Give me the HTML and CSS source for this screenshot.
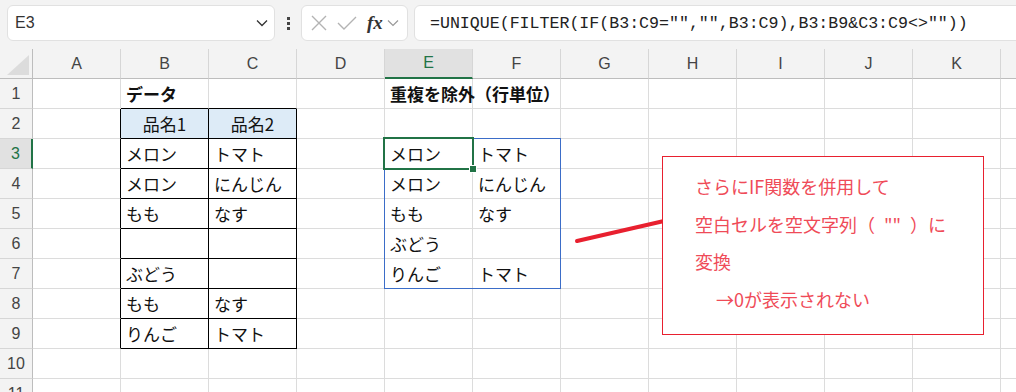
FILE: index.html
```html
<!DOCTYPE html>
<html>
<head>
    <meta charset="UTF-8">
    <title>UNIQUE FILTER</title>
    <link rel="stylesheet" href="styles.css">
</head>
<body>
    <div class="toolbar">
        <div class="name-box">
            <span>E3</span>
            <svg class="chev" width="12" height="8" viewBox="0 0 12 8"><path d="M1 1.5 L6 6.5 L11 1.5" fill="none" stroke="#333" stroke-width="1.3"/></svg>
        </div>
        <div class="dots"><i></i><i></i><i></i></div>
        <div class="fx-box">
            <svg width="20" height="20" viewBox="0 0 20 20"><path d="M3 3 L17 17 M17 3 L3 17" stroke="#b3b3b3" stroke-width="1.4"/></svg>
            <svg width="22" height="20" viewBox="0 0 22 20"><path d="M2 10 L8 16 L20 4" fill="none" stroke="#b3b3b3" stroke-width="1.4"/></svg>
            <span class="fx">fx</span>
            <svg class="chev" width="12" height="8" viewBox="0 0 12 8"><path d="M1 1.5 L6 6.5 L11 1.5" fill="none" stroke="#999" stroke-width="1.2"/></svg>
        </div>
        <div class="formula">=UNIQUE(FILTER(IF(B3:C9="","",B3:C9),B3:B9&amp;C3:C9&lt;&gt;""))</div>
    </div>

    <div class="sheet">
        <!-- column headers -->
        <div class="hd corner"><span></span></div>
        <div class="hd">A</div><div class="hd">B</div><div class="hd">C</div><div class="hd">D</div>
        <div class="hd sel">E</div><div class="hd">F</div><div class="hd">G</div><div class="hd">H</div>
        <div class="hd">I</div><div class="hd">J</div><div class="hd">K</div><div class="hd"></div>

        <!-- row 1 -->
        <div class="rh">1</div>
        <div class="c"></div><div class="c bt title">データ</div><div class="c bt"></div><div class="c"></div>
        <div class="c title">重複を除外（行単位）</div><div class="c"></div><div class="c"></div><div class="c"></div>
        <div class="c"></div><div class="c"></div><div class="c"></div><div class="c"></div>

        <!-- row 2 -->
        <div class="rh">2</div>
        <div class="c bl"></div><div class="c b head">品名1</div><div class="c b head">品名2</div><div class="c"></div>
        <div class="c"></div><div class="c"></div><div class="c"></div><div class="c"></div>
        <div class="c"></div><div class="c"></div><div class="c"></div><div class="c"></div>

        <!-- row 3 -->
        <div class="rh sel">3</div>
        <div class="c bl"></div><div class="c b">メロン</div><div class="c b">トマト</div><div class="c"></div>
        <div class="c">メロン</div><div class="c">トマト</div><div class="c"></div><div class="c"></div>
        <div class="c"></div><div class="c"></div><div class="c"></div><div class="c"></div>

        <!-- row 4 -->
        <div class="rh">4</div>
        <div class="c bl"></div><div class="c b">メロン</div><div class="c b">にんじん</div><div class="c"></div>
        <div class="c">メロン</div><div class="c">にんじん</div><div class="c"></div><div class="c"></div>
        <div class="c"></div><div class="c"></div><div class="c"></div><div class="c"></div>

        <!-- row 5 -->
        <div class="rh">5</div>
        <div class="c bl"></div><div class="c b">もも</div><div class="c b">なす</div><div class="c"></div>
        <div class="c">もも</div><div class="c">なす</div><div class="c"></div><div class="c"></div>
        <div class="c"></div><div class="c"></div><div class="c"></div><div class="c"></div>

        <!-- row 6 -->
        <div class="rh">6</div>
        <div class="c bl"></div><div class="c b"></div><div class="c b"></div><div class="c"></div>
        <div class="c">ぶどう</div><div class="c"></div><div class="c"></div><div class="c"></div>
        <div class="c"></div><div class="c"></div><div class="c"></div><div class="c"></div>

        <!-- row 7 -->
        <div class="rh">7</div>
        <div class="c bl"></div><div class="c b">ぶどう</div><div class="c b"></div><div class="c"></div>
        <div class="c">りんご</div><div class="c">トマト</div><div class="c"></div><div class="c"></div>
        <div class="c"></div><div class="c"></div><div class="c"></div><div class="c"></div>

        <!-- row 8 -->
        <div class="rh">8</div>
        <div class="c bl"></div><div class="c b">もも</div><div class="c b">なす</div><div class="c"></div>
        <div class="c"></div><div class="c"></div><div class="c"></div><div class="c"></div>
        <div class="c"></div><div class="c"></div><div class="c"></div><div class="c"></div>

        <!-- row 9 -->
        <div class="rh">9</div>
        <div class="c bl"></div><div class="c b">りんご</div><div class="c b">トマト</div><div class="c"></div>
        <div class="c"></div><div class="c"></div><div class="c"></div><div class="c"></div>
        <div class="c"></div><div class="c"></div><div class="c"></div><div class="c"></div>

        <!-- row 10 -->
        <div class="rh">10</div>
        <div class="c"></div><div class="c"></div><div class="c"></div><div class="c"></div>
        <div class="c"></div><div class="c"></div><div class="c"></div><div class="c"></div>
        <div class="c"></div><div class="c"></div><div class="c"></div><div class="c"></div>

        <!-- row 11 -->
        <div class="rh">11</div>
        <div class="c"></div><div class="c"></div><div class="c"></div><div class="c"></div>
        <div class="c"></div><div class="c"></div><div class="c"></div><div class="c"></div>
        <div class="c"></div><div class="c"></div><div class="c"></div><div class="c"></div>

        <!-- overlays -->
        <div class="spill"></div>
        <div class="active"></div>
        <div class="handle"></div>
        <svg class="pointer" width="100" height="36" viewBox="0 0 100 36">
            <line x1="7" y1="27" x2="94" y2="7" stroke="#e8202f" stroke-width="4" stroke-linecap="round"/>
        </svg>
        <div class="callout">
            <p>さらにIF関数を併用して</p>
            <p>空白セルを空文字列（<span class="q">""</span>）に</p>
            <p>変換</p>
            <p class="indent">→0が表示されない</p>
        </div>
    </div>
</body>
</html>
```

FILE: styles.css
```css
body {
    margin: 0;
    width: 1016px;
    height: 392px;
    overflow: hidden;
    background: white;
    font-family: 'Liberation Sans', Arial, sans-serif;
    color: #222;
}
.toolbar {
    display: flex;
    align-items: flex-start;
    height: 49px;
    box-sizing: border-box;
    padding: 5px 0 0 7px;
    background: #f3f3f3;
    overflow: hidden;
}
.name-box, .fx-box, .formula {
    height: 36px;
    box-sizing: border-box;
    background: white;
    border: 1px solid #e1e1e1;
    border-radius: 6px;
    display: flex;
    align-items: center;
}
.name-box {
    width: 268px;
    padding: 0 6px 0 7px;
    justify-content: space-between;
    font-size: 16px;
    color: #333;
}
.dots {
    width: 26px;
    height: 36px;
    display: flex;
    flex-direction: column;
    align-items: center;
    justify-content: center;
    gap: 2px;
}
.dots i {
    width: 3px;
    height: 3px;
    background: #444;
}
.fx-box {
    width: 107px;
    padding: 0 0 0 7px;
    gap: 7px;
}
.fx {
    font-family: 'Liberation Serif', serif;
    font-style: italic;
    font-weight: bold;
    font-size: 19px;
    color: #333;
    margin: 0 -3px 0 2px;
}
.formula {
    flex: 1;
    margin: 0 -20px 0 6px;
    padding-left: 15px;
    font-family: 'Liberation Mono', monospace;
    font-size: 16.6px;
    color: #222;
    white-space: nowrap;
}

.sheet {
    position: relative;
    display: grid;
    grid-template-columns: 33px repeat(12, 88px);
    grid-auto-rows: 30px;
}
.hd {
    background: #f3f3f3;
    border-right: 1px solid #d6d6d6;
    border-bottom: 1px solid #bdbdbd;
    display: flex;
    align-items: center;
    justify-content: center;
    font-size: 16px;
    color: #444;
}
.hd.sel {
    background: #e1e1e1;
    color: #217346;
    border-bottom: 2px solid #217346;
}
.corner {
    border-right: 1px solid #bdbdbd;
    position: relative;
}
.corner span {
    position: absolute;
    right: 3px;
    bottom: 3px;
    width: 22px;
    height: 20px;
    background: #dcdcdc;
    clip-path: polygon(100% 0, 100% 100%, 0 100%);
}
.rh {
    background: #f3f3f3;
    border-right: 1px solid #bdbdbd;
    border-bottom: 1px solid #d6d6d6;
    display: flex;
    align-items: center;
    justify-content: center;
    font-size: 16px;
    color: #444;
}
.rh.sel {
    background: #e1e1e1;
    color: #217346;
    border-right: 2px solid #217346;
}
.c {
    border-right: 1px solid #dcdcdc;
    border-bottom: 1px solid #dcdcdc;
    display: flex;
    align-items: center;
    padding-left: 5px;
    font-family: 'Noto Sans CJK JP', sans-serif;
    font-size: 17px;
    color: #111;
    white-space: nowrap;
    min-width: 0;
}
.b {
    border-right-color: #000;
    border-bottom-color: #000;
}
.bl {
    border-right-color: #000;
}
.bt {
    border-bottom-color: #000;
}
.head {
    background: #ddebf7;
    justify-content: center;
    padding-left: 0;
}
.title {
    font-weight: bold;
    position: relative;
    z-index: 1;
}
.spill {
    position: absolute;
    left: 384px;
    top: 89px;
    width: 177px;
    height: 151px;
    box-sizing: border-box;
    border: 1px solid #3b6dc8;
}
.active {
    position: absolute;
    left: 383px;
    top: 88px;
    width: 91px;
    height: 33px;
    box-sizing: border-box;
    border: 2px solid #217346;
}
.handle {
    position: absolute;
    left: 469px;
    top: 116px;
    width: 6px;
    height: 6px;
    background: #217346;
    border: 1px solid white;
}
.pointer {
    position: absolute;
    left: 570px;
    top: 165px;
}
.callout {
    position: absolute;
    left: 662px;
    top: 107px;
    width: 322px;
    height: 179px;
    box-sizing: border-box;
    border: 1.5px solid #e8202f;
    background: white;
    padding: 11px 0 0 32px;
    font-family: 'Noto Sans CJK JP', sans-serif;
    font-size: 18px;
    color: #ef4b58;
}
.callout p {
    margin: 0;
    line-height: 37.5px;
    white-space: nowrap;
}
.callout .q {
    margin: 0 9px;
}
.callout .indent {
    padding-left: 21px;
}
```
